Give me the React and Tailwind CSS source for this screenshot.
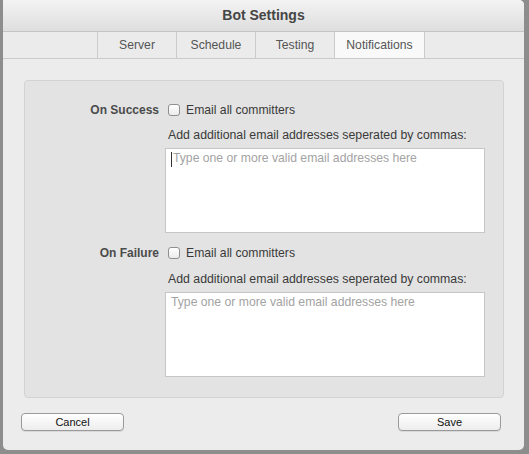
const tabs = [
  { label: 'Server', w: 'w-[79px]' },
  { label: 'Schedule', w: 'w-[79px]' },
  { label: 'Testing', w: 'w-[79px]' },
  { label: 'Notifications', w: 'w-[91px]', active: true },
];

const Checkbox = () => (
  <span className="ml-[3px] inline-block w-[12px] h-[12px] rounded-[3px] border border-[#8f8f8f] bg-gradient-to-b from-white to-[#ececec] shadow-[inset_0_1px_0_rgba(255,255,255,0.9)]" />
);

const EmailBox = ({ caret }) => (
  <div className="relative mt-[5px] w-[320px] h-[85px] bg-white border border-[#c6c6c6] pl-[5px] pt-[1px] text-[12.2px] leading-[16px] text-[#a3a3a3]">
    {caret && <span className="absolute left-[5px] top-[3px] w-px h-[15px] bg-[#333]" />}
    <span className={caret ? 'ml-[2px]' : ''}>Type one or more valid email addresses here</span>
  </div>
);

const Section = ({ label, caret, first }) => (
  <div className={`flex ${first ? 'mt-[21px]' : 'mt-[12px]'}`}>
    <div className="w-[134px] text-right text-[12px] leading-[16px] font-bold text-[#4b4b4b]">{label}</div>
    <div className="ml-[6px]">
      <div className="flex items-center h-[16px] text-[12.2px] text-[#3a3a3a]">
        <Checkbox />
        <span className="ml-[6px]">Email all committers</span>
      </div>
      <div className={`${first ? 'mt-[9px]' : 'mt-[10px]'} ml-[3px] text-[12.3px] leading-[16px] text-[#3a3a3a]`}>
        Add additional email addresses seperated by commas:
      </div>
      <EmailBox caret={caret} />
    </div>
  </div>
);

const Button = ({ children }) => (
  <button className="w-[103px] h-[18px] rounded-[4px] border border-[#9a9a9a] bg-gradient-to-b from-white to-[#ededed] text-[11px] leading-[16px] text-[#111] shadow-[0_1px_0_rgba(0,0,0,0.08)]">
    {children}
  </button>
);

export default function App() {
  return (
    <div className="w-[529px] h-[454px] bg-[#8d8d8d] pl-[3px] font-['Liberation_Sans',Arial,sans-serif]">
      <div className="w-[521px] h-[450px] bg-[#ececec] rounded-b-[5px] rounded-tr-[5px] flex flex-col overflow-hidden">
        <div className="h-[32px] shrink-0 bg-gradient-to-b from-[#f3f3f3] to-[#dedede] border-b border-[#c4c4c4] flex items-center justify-center">
          <span className="text-[14px] font-bold text-[#454545] -mt-[1px]">Bot Settings</span>
        </div>
        <div className="h-[27px] shrink-0 bg-[#ebebeb] border-b border-[#cbcbcb] flex pl-[94px]">
          {tabs.map((t, i) => (
            <div
              key={t.label}
              className={`${t.w} flex items-center justify-center text-[12.2px] text-[#555] border-l border-[#cbcbcb] ${
                i === tabs.length - 1 ? 'border-r' : ''
              } ${t.active ? 'bg-[#f9f9f9]' : ''}`}
            >
              {t.label}
            </div>
          ))}
        </div>
        <div className="mt-[21px] ml-[21px] w-[480px] h-[318px] bg-[#e3e3e3] border border-[#d3d3d3] rounded-[4px]">
          <Section label="On Success" caret first />
          <Section label="On Failure" />
        </div>
        <div className="mt-[15px] flex justify-between pl-[18px] pr-[23px]">
          <Button>Cancel</Button>
          <Button>Save</Button>
        </div>
      </div>
    </div>
  );
}
